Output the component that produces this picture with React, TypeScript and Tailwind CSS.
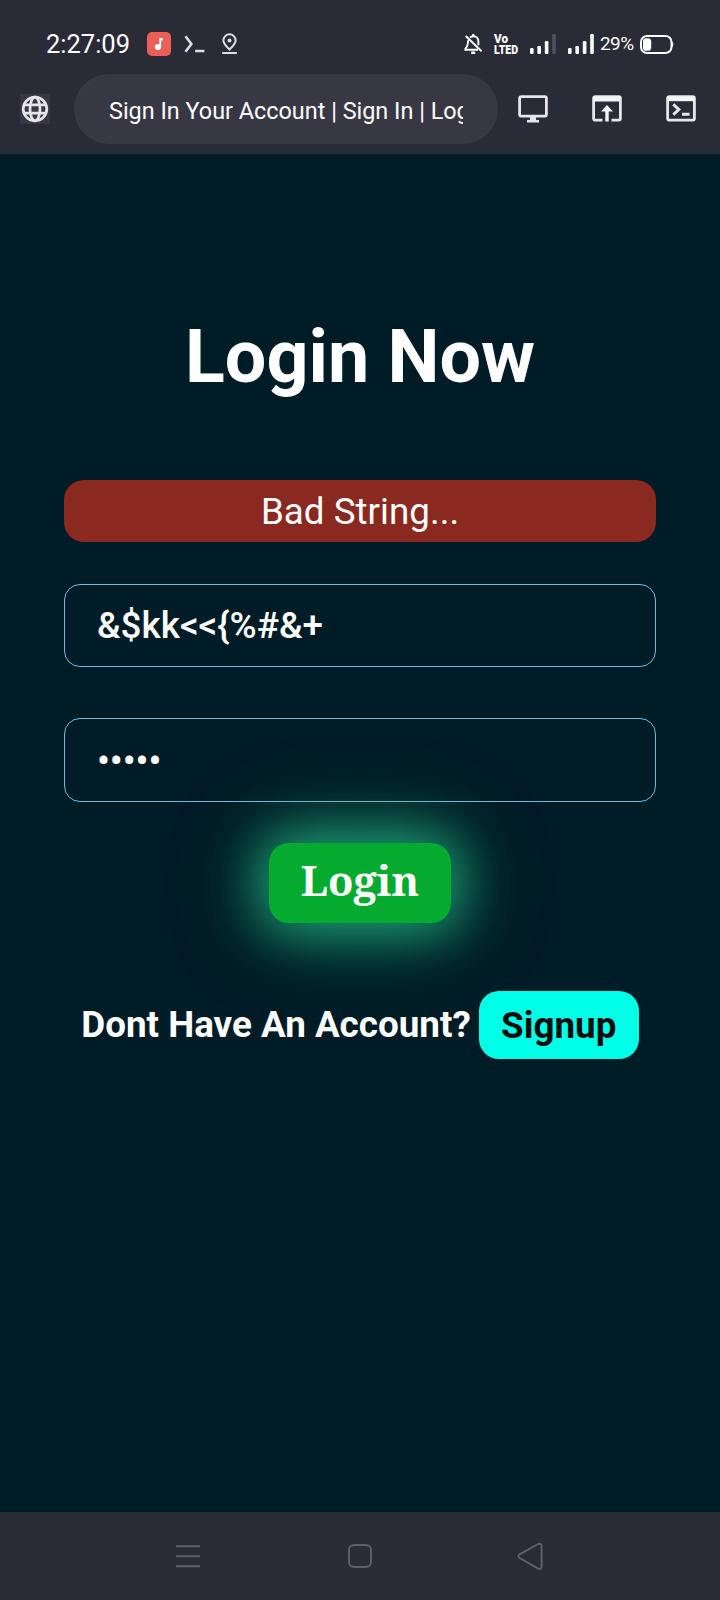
import type { ReactNode } from "react";

function Signal({ dim = false }: { dim?: boolean }) {
  return (
    <svg width="26" height="20" viewBox="0 0 26 20" fill="#fff">
      <rect x="0" y="14" width="3.6" height="6" rx="1.2" />
      <rect x="7.4" y="12" width="3.6" height="8" rx="1.2" />
      <rect x="14.8" y="7" width="3.6" height="13" rx="1.2" />
      <rect x="22.2" y="0" width="3.6" height="20" rx="1.2" fill={dim ? "#50515c" : "#fff"} />
    </svg>
  );
}

function StatusBar() {
  return (
    <div className="flex h-[74px] items-start pt-[32px] pl-[46px] pr-[46px]">
      <div className="h-6 w-[86px] text-[25.5px] leading-[24px] whitespace-nowrap">2:27:09</div>
      <svg className="ml-[15px]" width="24" height="24" viewBox="0 0 24 24">
        <rect width="24" height="24" rx="5" fill="#ec5f59" />
        <circle cx="11" cy="15" r="3.1" fill="#fff" />
        <path d="M12.4 15V6H16V8.4H14.1V15Z" fill="#fff" />
      </svg>
      <svg className="ml-[13px] mt-[3px]" width="22" height="18" viewBox="0 0 22 18" fill="none" stroke="#dedee3" strokeWidth="2.5">
        <path d="M1.5 1.2L7.4 9L1.5 16.8M11.2 16H20.4" />
      </svg>
      <svg className="ml-[14px] mt-[1px]" width="20" height="22" viewBox="0 0 20 22" fill="none" stroke="#dedee3" strokeWidth="2">
        <path d="M9.5 16.5C5.6 12.7 3.4 10.2 3.4 7.4a6.1 6.1 0 0 1 12.2 0c0 2.8-2.2 5.3-6.1 9.1Z" />
        <circle cx="9.5" cy="7.5" r="2" fill="#dedee3" stroke="none" />
        <path d="M2.2 20H16.8" />
      </svg>
      <div className="grow" />
      <svg className="mt-[1px]" width="20" height="22" viewBox="0 0 20 22" fill="none" stroke="#fff" strokeWidth="1.9">
        <path d="M6 4.6C7 3.6 8.1 3.2 9.2 3.2c3.2 0 5.2 2.3 5.2 5.4v3.6M4.2 7.2c-.2 4.5-.6 6.3-2.8 8.5v1.1H14M1.7 3L17.6 18.2" />
        <path d="M9.2 1V3.2M7.2 19.8h4" strokeWidth="2.4" />
      </svg>
      <svg className="ml-[10px] mt-[1px] overflow-visible font-[Roboto] font-black" width="24" height="22" viewBox="0 0 24 22" fill="#fff">
        <text x="0" y="10" fontSize="12.5" textLength="14" lengthAdjust="spacingAndGlyphs">Vo</text>
        <text x="0" y="21" fontSize="13" textLength="24" lengthAdjust="spacingAndGlyphs">LTED</text>
      </svg>
      <div className="ml-[12px] mt-[2px]"><Signal dim /></div>
      <div className="ml-[12px] mt-[2px]"><Signal /></div>
      <div className="ml-[6px] h-6 w-[35px] text-[19px] leading-[24px] tracking-[-0.6px] whitespace-nowrap">29%</div>
      <svg className="ml-[5px] mt-[3px]" width="34" height="19" viewBox="0 0 34 19">
        <rect x="1" y="1" width="30.5" height="17" rx="6" fill="none" stroke="#fff" strokeWidth="2" />
        <rect x="3" y="3.2" width="8.2" height="12.6" rx="3.4" fill="#fff" />
        <path d="M32 6.5Q34.6 9.5 32 12.5Z" fill="#fff" />
      </svg>
    </div>
  );
}

function BrowserBar() {
  return (
    <div className="flex h-[80px] items-start">
      <div className="ml-[20px] mt-[20px] size-[30px] bg-[#373843]">
        <svg width="30" height="30" viewBox="0 0 30 30" fill="none" stroke="#e6e6ea" strokeWidth="2.7">
          <circle cx="15" cy="15" r="11.8" />
          <ellipse cx="15" cy="15" rx="5" ry="11.8" />
          <path d="M4 10.8H26M4 19.2H26" />
        </svg>
      </div>
      <div className="ml-[24px] flex h-[70px] w-[424px] items-center rounded-full bg-[#373843] pr-[35px] pl-[35px]">
        <div className="mt-[3px] w-full overflow-hidden text-[23.4px] leading-[30px] whitespace-nowrap">
          Sign In Your Account | Sign In | Login
        </div>
      </div>
      <svg className="ml-[20px] mt-[21px]" width="30" height="28" viewBox="0 0 30 28" fill="none" stroke="#e6e6ea" strokeWidth="2.8">
        <rect x="1.6" y="1.6" width="26.8" height="19.6" rx="1.6" />
        <path d="M12 21H18V27H12Z" fill="#e6e6ea" stroke="none" />
        <path d="M9 26.2H21" strokeWidth="2.6" />
      </svg>
      <svg className="ml-[44px] mt-[21px]" width="30" height="28" viewBox="0 0 30 28" fill="none" stroke="#e6e6ea" strokeWidth="2.8">
        <path d="M10.5 25.2H3.2a1.6 1.6 0 0 1-1.6-1.6V3.2a1.6 1.6 0 0 1 1.6-1.6H26.8a1.6 1.6 0 0 1 1.6 1.6V23.6a1.6 1.6 0 0 1-1.6 1.6H19.5" />
        <path d="M1.5 1.5H28.5V6.5H1.5ZM15 10L21 16.6H16.7V26.6H13.3V16.6H9Z" fill="#f4f4f6" stroke="none" />
      </svg>
      <svg className="ml-[44px] mt-[21px]" width="30" height="28" viewBox="0 0 30 28" fill="none" stroke="#e6e6ea" strokeWidth="2.8">
        <rect x="1.6" y="1.6" width="26.8" height="23.6" rx="1.6" />
        <path d="M1.5 1.5H28.5V6.2H1.5Z" fill="#f4f4f6" stroke="none" />
        <path d="M7.3 9.4L12.8 14.5L7.3 19.6M16 19.2H23.5" strokeWidth="3" />
      </svg>
    </div>
  );
}

function Field({ children }: { children: ReactNode }) {
  return (
    <div className="flex h-full w-[592px] items-center rounded-[16px] border border-[#70bbe6] pl-[32px] text-[36.8px] leading-[42px] font-medium">
      {children}
    </div>
  );
}

export default function App() {
  return (
    <div className="flex h-[1600px] w-[720px] flex-col overflow-hidden bg-[#001c26] font-[Roboto,sans-serif] text-white">
      <header className="h-[154px] bg-[#292b36]">
        <StatusBar />
        <BrowserBar />
      </header>

      <main className="flex grow flex-col items-center">
        <h1 className="mt-[159px] h-[88px] text-[73.6px] leading-[88px] font-bold whitespace-nowrap">Login Now</h1>
        <div className="mt-[79px] flex h-[62px] w-[592px] items-center justify-center rounded-[20px] bg-[#8a291f] pt-px text-[36.8px] leading-[42px]">
          Bad String...
        </div>
        <div className="mt-[42px] h-[83px]">
          <Field>&amp;$kk&lt;&lt;{"{"}%#&amp;+</Field>
        </div>
        <div className="mt-[51px] h-[84px]">
          <Field><span className="pt-[2px]">•••••</span></Field>
        </div>
        <button className="mt-[41px] flex h-[80px] w-[182px] items-center justify-center rounded-[20px] bg-[#04ab2f] pb-[6px] font-['Noto_Serif',serif] text-[41.6px] leading-[56px] font-bold shadow-[0_0_100px_#1b9e7466,0_0_54px_9px_#1fa877]">
          Login
        </button>
        <div className="mt-[68px] flex h-[68px] items-center gap-[8px]">
          <span className="text-[36.8px] leading-[42px] font-bold whitespace-nowrap">Dont Have An Account?</span>
          <button className="flex h-[68px] w-[160px] items-center justify-center rounded-[20px] bg-[#00ffe7] pt-px text-[36.8px] leading-[42px] font-bold text-[#010d0c]">
            Signup
          </button>
        </div>
      </main>

      <nav className="flex h-[88px] items-start bg-[#292b36] text-[#5e5f6a]">
        <svg className="ml-[176px] mt-[32px]" width="24" height="25" viewBox="0 0 24 25" stroke="currentColor" strokeWidth="2">
          <path d="M0 2.3H24M0 12.3H24M0 22.3H24" />
        </svg>
        <svg className="ml-[148px] mt-[32px]" width="24" height="24" viewBox="0 0 24 24" fill="none" stroke="currentColor" strokeWidth="2">
          <rect x="1" y="1" width="22" height="22" rx="5" />
        </svg>
        <svg className="ml-[145px] mt-[30px]" width="27" height="29" viewBox="0 0 27 29" fill="none" stroke="currentColor" strokeWidth="2" strokeLinejoin="round">
          <path d="M2.6 12.4L21.2 2Q24.3.8 24.6 4V24.5Q24.3 27.8 21.2 26.6L2.6 16Q.2 14.2 2.6 12.4Z" />
        </svg>
      </nav>
    </div>
  );
}
